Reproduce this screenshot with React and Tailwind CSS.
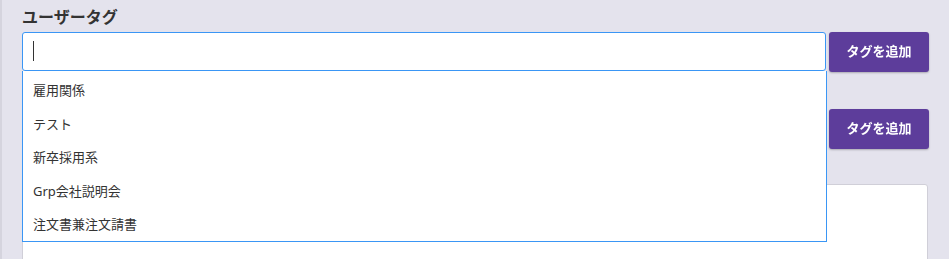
import React, { useState } from 'react';

const suggestions = ['雇用関係', 'テスト', '新卒採用系', 'Grp会社説明会', '注文書兼注文請書'];

const AddButton = () => (
  <button className="w-[100px] h-[40px] shrink-0 rounded-[3px] bg-[#5d3d9b] text-white text-[13px] font-bold shadow-[0_1px_2px_rgba(0,0,0,0.25)]">
    タグを追加
  </button>
);

const App = () => {
  const [value, setValue] = useState('');

  return (
    <div
      className="h-[259px] w-[949px] overflow-hidden bg-[#e4e3ed] border-l-2 border-[#d5d4de] text-[#333]"
      style={{ fontFamily: '"Noto Sans", "Noto Sans CJK JP", sans-serif' }}
    >
      <div className="pl-[20px] pr-[20px]">
        <h2 className="pt-[5px] h-[32px] text-[16px] leading-[24px] font-bold text-[#333]">ユーザータグ</h2>

        <div className="relative">
          <div className="flex gap-[3px]">
            <div className="w-[805px] h-[39px] rounded-[3px] border border-[#3a96f5] bg-white flex items-center pl-[11px]">
              <input
                value={value}
                onChange={(e) => setValue(e.target.value)}
                autoFocus
                className="w-full outline-none text-[13px] bg-transparent"
              />
              <span className="absolute left-[11px] top-[9px] w-px h-[20px] bg-[#333]" />
            </div>
            <AddButton />
          </div>

          {/* suggestion list */}
          <ul className="absolute left-0 top-[39px] z-10 w-[805px] h-[171px] bg-white border border-t-0 border-[#3a96f5] pt-[3px]">
            {suggestions.map((s) => (
              <li key={s} className="h-[33.5px] flex items-center px-[10px] text-[13px]">
                {s}
              </li>
            ))}
          </ul>

          <div className="flex gap-[3px] mt-[37px]">
            <div className="w-[805px] h-[40px] rounded-[3px] border border-[#c9c8d2] bg-white" />
            <AddButton />
          </div>

          <div className="mt-[35px] w-[906px] h-[100px] bg-white border border-[#d0cfd8] rounded-tr-[3px]" />
        </div>
      </div>
    </div>
  );
};

export default App;
